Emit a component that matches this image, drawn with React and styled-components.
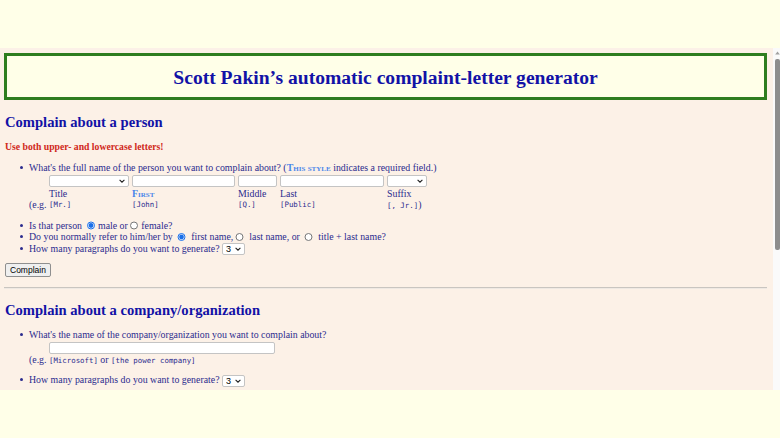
import React from "react";
import styled, { createGlobalStyle } from "styled-components";

const Global = createGlobalStyle`
  html, body { margin: 0; padding: 0; }
  body {
    background: #ffffe8;
    font-family: "Liberation Serif", "Times New Roman", serif;
    overflow: hidden;
  }
`;

const Page = styled.div`
  display: flex;
  flex-direction: column;
  width: 780px;
  height: 438px;
`;

const TopSpace = styled.div`
  height: 48px;
  flex: none;
`;

const Frame = styled.div`
  display: flex;
  height: 342px;
  flex: none;
  background: #fcf1e7;
`;

const Content = styled.div`
  flex: 1;
  overflow: hidden;
  padding: 5px 6px 0 4px;
  color: #2b2b8e;
  font-size: 9.85px;
  line-height: 11.5px;
`;

const ScrollTrack = styled.div`
  width: 7px;
  flex: none;
  background: #fafafa;
  display: flex;
  flex-direction: column;
  align-items: flex-end;
  padding-top: 3px;
  box-sizing: border-box;
`;

const ArrowUp = styled.svg`
  width: 5px;
  height: 4px;
  display: block;
`;

const Thumb = styled.div`
  width: 5px;
  height: 191px;
  margin-top: 4px;
  background: #8d8d8d;
  border-radius: 2px;
`;

const TitleBox = styled.div`
  border: 3px solid #2e7d1f;
  background: #ffffe8;
  height: 41px;
  display: flex;
  align-items: center;
  justify-content: center;
`;

const Title = styled.h1`
  margin: 1px 0 0;
  font-size: 19.6px;
  font-weight: bold;
  color: #1212a6;
  line-height: 23px;
`;

const Heading = styled.h2`
  margin: ${p => p.$top}px 0 0 1px;
  font-size: 14.6px;
  line-height: 17px;
  font-weight: bold;
  color: #1212a6;
`;

const Warning = styled.p`
  margin: 10px 0 0 1px;
  font-size: 9.7px;
  line-height: 12px;
  font-weight: bold;
  color: #d0281a;
`;

const List = styled.ul`
  margin: ${p => p.$top}px 0 0;
  padding: 0 0 0 25px;
  list-style: none;
`;

const Item = styled.li`
  margin-top: ${p => p.$top || 0}px;
  &::before {
    content: "";
    display: inline-block;
    width: 3px;
    height: 3px;
    border-radius: 50%;
    background: currentColor;
    margin: 0 6px 0 -9px;
    vertical-align: 2px;
  }
`;

const Req = styled.span`
  color: #4a86ea;
  font-weight: bold;
  font-variant: small-caps;
`;

const NameGrid = styled.div`
  display: grid;
  grid-template-columns: 17px 80px 103px 39px 104px 40px;
  column-gap: 3px;
  grid-template-rows: 13px 11.5px 11.5px;
  align-items: center;
  margin-top: 1px;
  margin-bottom: 9px;
`;

const TextBox = styled.input`
  box-sizing: border-box;
  width: ${p => p.$w || "100%"};
  height: 12px;
  margin: 0;
  padding: 0 2px;
  border: 1px solid #c4c4c4;
  border-radius: 2px;
  background: #fff;
  font-size: 8px;
  display: block;
`;

const SelectWrap = styled.span`
  position: relative;
  display: ${p => (p.$inline ? "inline-block" : "block")};
  width: ${p => p.$w || "auto"};
  height: 12px;
  vertical-align: middle;
`;

const Select = styled.select`
  appearance: none;
  -webkit-appearance: none;
  box-sizing: border-box;
  width: 100%;
  height: 12px;
  margin: 0;
  padding: 0 0 0 3px;
  border: 1px solid #c4c4c4;
  border-radius: 2px;
  background: #fff;
  font-size: 9px;
  line-height: 10px;
  font-family: "Liberation Sans", Arial, sans-serif;
  color: #000;
  display: block;
`;

const Chevron = styled.svg`
  position: absolute;
  right: 4px;
  top: 4px;
  width: 6px;
  height: 4px;
  pointer-events: none;
`;

function Dropdown({ w, inline, value, label }) {
  return (
    <SelectWrap $w={w} $inline={inline}>
      <Select aria-label={label} defaultValue={value || ""}>
        <option value={value || ""}>{value || ""}</option>
      </Select>
      <Chevron viewBox="0 0 6 4">
        <path d="M0.6 0.8 L3 3.2 L5.4 0.8" fill="none" stroke="#222" strokeWidth="1.1" />
      </Chevron>
    </SelectWrap>
  );
}

const Label = styled.span`
  white-space: nowrap;
  ${p => p.$req && `color: #4a86ea; font-weight: bold; font-variant: small-caps;`}
`;

const Mono = styled.code`
  font-family: "DejaVu Sans Mono", "Liberation Mono", monospace;
  font-size: 7.4px;
  color: #2b2b8e;
`;

const EgText = styled.span`
  white-space: nowrap;
`;

const Radio = styled.input.attrs({ type: "radio" })`
  width: 8.5px;
  height: 8.5px;
  margin: 0 3px 0 2px;
  vertical-align: -1px;
  accent-color: #1a6fe8;
`;

const Button = styled.button`
  margin-top: 8px;
  margin-left: 1px;
  height: 14px;
  padding: 0 4px;
  font-family: "Liberation Sans", Arial, sans-serif;
  font-size: 8.5px;
  line-height: 12px;
  color: #000;
  background: #efefef;
  border: 1px solid #8f8f8f;
  border-radius: 2px;
  display: block;
`;

const Rule = styled.hr`
  margin: 10px 0 0;
  border: none;
  border-top: 1px solid #c9c5c0;
  border-bottom: 1px solid #efe9e3;
`;

const CompanyInput = styled.div`
  margin: 1px 0 0 20px;
`;

export default function App() {
  return (
    <Page>
      <Global />
      <TopSpace />
      <Frame>
        <Content>
          <TitleBox>
            <Title>Scott Pakin’s automatic complaint-letter generator</Title>
          </TitleBox>

          <Heading $top={14}>Complain about a person</Heading>
          <Warning>Use both upper- and lowercase letters!</Warning>

          <List $top={9}>
            <Item>
              What's the full name of the person you want to complain about? (
              <Req>This style</Req> indicates a required field.)
              <NameGrid>
                <span />
                <Dropdown label="Title" />
                <TextBox aria-label="First" />
                <TextBox aria-label="Middle" />
                <TextBox aria-label="Last" />
                <Dropdown label="Suffix" />

                <span />
                <Label>Title</Label>
                <Label $req>First</Label>
                <Label>Middle</Label>
                <Label>Last</Label>
                <Label>Suffix</Label>

                <EgText>(e.g.</EgText>
                <Mono>[Mr.]</Mono>
                <Mono>[John]</Mono>
                <Mono>[Q.]</Mono>
                <Mono>[Public]</Mono>
                <EgText><Mono>[, Jr.]</Mono>)</EgText>
              </NameGrid>
            </Item>
            <Item>
              Is that person <Radio name="sex" defaultChecked />male or
              <Radio name="sex" />female?
            </Item>
            <Item>
              Do you normally refer to him/her by <Radio name="ref" defaultChecked /> first name,
              <Radio name="ref" /> last name, or <Radio name="ref" /> title + last name?
            </Item>
            <Item>
              How many paragraphs do you want to generate?{" "}
              <Dropdown inline w="23px" value="3" label="Paragraphs" />
            </Item>
          </List>

          <Button>Complain</Button>
          <Rule />

          <Heading $top={13}>Complain about a company/organization</Heading>

          <List $top={10}>
            <Item>
              What's the name of the company/organization you want to complain about?
              <CompanyInput>
                <TextBox $w="226px" aria-label="Company" />
              </CompanyInput>
              <div>
                <EgText>(e.g. <Mono>[Microsoft]</Mono> or <Mono>[the power company]</Mono></EgText>
              </div>
            </Item>
            <Item $top={8}>
              How many paragraphs do you want to generate?{" "}
              <Dropdown inline w="23px" value="3" label="Paragraphs" />
            </Item>
          </List>
        </Content>
        <ScrollTrack>
          <ArrowUp viewBox="0 0 5 4">
            <path d="M2.5 0.5 L4.8 3.5 L0.2 3.5 Z" fill="#a0a0a0" />
          </ArrowUp>
          <Thumb />
        </ScrollTrack>
      </Frame>
    </Page>
  );
}
